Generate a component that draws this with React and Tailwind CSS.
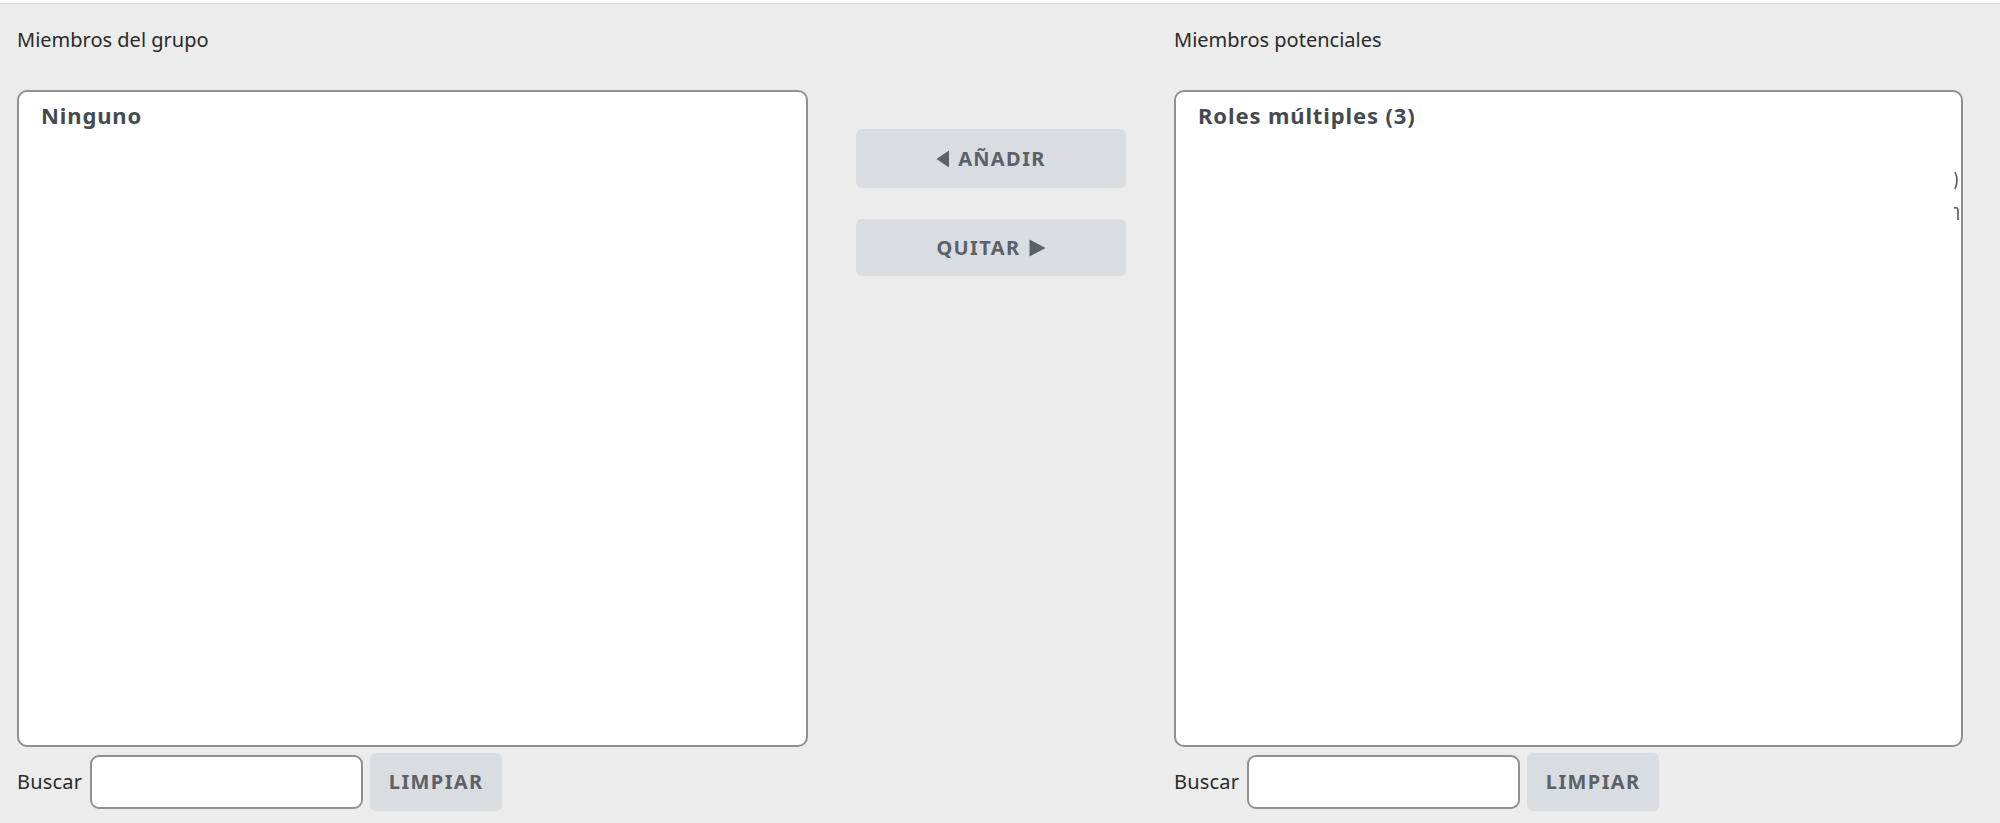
import React from "react";

const font = { fontFamily: '"Noto Sans", "Open Sans", sans-serif' };

const GrayButton = ({ children, className = "" }) => (
  <button
    className={`flex items-center justify-center gap-2 rounded-md bg-[#d9dce1] text-[20px] font-bold tracking-[0.07em] text-[#5c6168] uppercase ${className}`}
  >
    {children}
  </button>
);

const SearchRow = () => (
  <div className="mt-[6px] flex items-center h-[58px]">
    <label className="text-[20px] tracking-[0.01em] text-[#2a2a2a] mr-[8px]">Buscar</label>
    <input
      type="text"
      className="h-[54px] w-[273px] rounded-[9px] border-2 border-[#8d9095] bg-white outline-none"
    />
    <GrayButton className="ml-[7px] h-[58px] w-[132px]">Limpiar</GrayButton>
  </div>
);

const MemberList = ({ title, clipped }) => (
  <div className="relative h-[657px] overflow-hidden rounded-[10px] border-2 border-[#8d9095] bg-white px-[22px] pt-[7px]">
    <div className="text-[22px] font-bold tracking-[0.04em] text-[#444a52]">{title}</div>
    {clipped && (
      <svg
        className="absolute right-0 top-[78px]"
        width="8"
        height="56"
        viewBox="0 0 8 56"
        fill="none"
        stroke="#555b63"
        strokeWidth="1.6"
      >
        <path d="M2 2 Q6 10 2 19" />
        <path d="M1 38 Q5 37 5 40 L5 50" />
      </svg>
    )}
  </div>
);

export default function App() {
  return (
    <div className="min-h-[823px] w-[2000px] bg-[#ececec]" style={font}>
      <div className="h-[4px] border-b border-[#dadada] bg-white" />
      <div className="grid grid-cols-[791px_270px_789px] gap-x-[48px] pl-[17px]">
        <div>
          <div className="h-[86px] pt-[21px] text-[20px] text-[#2a2a2a]">
            Miembros del grupo
          </div>
          <MemberList title="Ninguno" />
          <SearchRow />
        </div>
        <div className="flex flex-col gap-[31px] pt-[125px]">
          <GrayButton className="h-[59px] w-[270px]">
            <svg width="14" height="18" viewBox="0 0 14 18">
              <path d="M13 0.5 L0.5 9 L13 17.5 Z" fill="#5c6168" />
            </svg>
            Añadir
          </GrayButton>
          <GrayButton className="h-[57px] w-[270px]">
            Quitar
            <svg width="17" height="18" viewBox="0 0 17 18">
              <path d="M0.5 0.5 L16.5 9 L0.5 17.5 Z" fill="#5c6168" />
            </svg>
          </GrayButton>
        </div>
        <div>
          <div className="h-[86px] pt-[21px] text-[20px] text-[#2a2a2a]">
            Miembros potenciales
          </div>
          <MemberList title="Roles múltiples (3)" clipped />
          <SearchRow />
        </div>
      </div>
    </div>
  );
}
